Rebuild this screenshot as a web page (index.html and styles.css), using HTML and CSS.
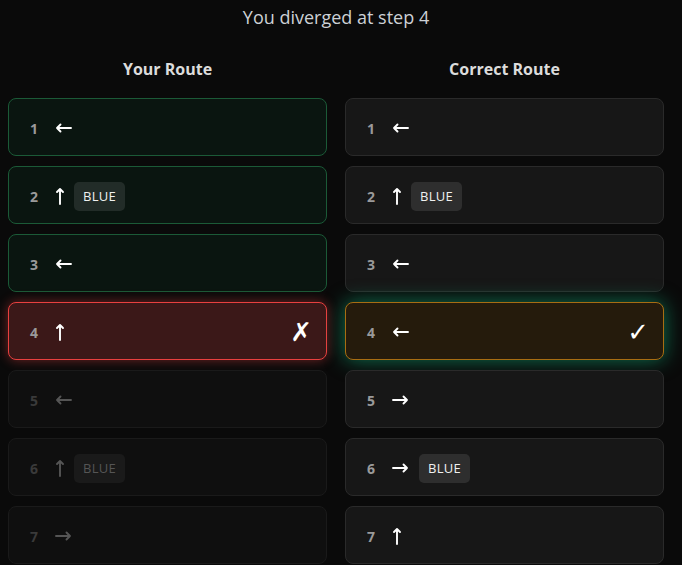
FILE: index.html
```html
<!DOCTYPE html>
<html>
<head>
<meta charset="utf-8">
<link rel="stylesheet" href="styles.css">
</head>
<body>
<div class="wrap">
  <h1 class="title">You diverged at step 4</h1>
  <div class="cols">
    <div class="col">
      <h2 class="heading">Your Route</h2>
      <div class="card ok"><span class="num">1</span><svg class="arrow h" viewBox="0 0 17 12"><path d="M16 6H2M5.5 2.5L2 6l3.5 3.5"/></svg></div>
      <div class="card ok"><span class="num">2</span><svg class="arrow v" viewBox="0 0 10 18"><path d="M5 17V2M2 5L5 2l3 3"/></svg><span class="badge">BLUE</span></div>
      <div class="card ok"><span class="num">3</span><svg class="arrow h" viewBox="0 0 17 12"><path d="M16 6H2M5.5 2.5L2 6l3.5 3.5"/></svg></div>
      <div class="card wrong"><span class="num">4</span><svg class="arrow v" viewBox="0 0 10 18"><path d="M5 17V2M2 5L5 2l3 3"/></svg><span class="mark">✗</span></div>
      <div class="card faded"><span class="num">5</span><svg class="arrow h" viewBox="0 0 17 12"><path d="M16 6H2M5.5 2.5L2 6l3.5 3.5"/></svg></div>
      <div class="card faded"><span class="num">6</span><svg class="arrow v" viewBox="0 0 10 18"><path d="M5 17V2M2 5L5 2l3 3"/></svg><span class="badge">BLUE</span></div>
      <div class="card faded"><span class="num">7</span><svg class="arrow h" viewBox="0 0 17 12"><path d="M1 6h14M11.5 2.5L15 6l-3.5 3.5"/></svg></div>
    </div>
    <div class="col">
      <h2 class="heading">Correct Route</h2>
      <div class="card"><span class="num">1</span><svg class="arrow h" viewBox="0 0 17 12"><path d="M16 6H2M5.5 2.5L2 6l3.5 3.5"/></svg></div>
      <div class="card"><span class="num">2</span><svg class="arrow v" viewBox="0 0 10 18"><path d="M5 17V2M2 5L5 2l3 3"/></svg><span class="badge">BLUE</span></div>
      <div class="card"><span class="num">3</span><svg class="arrow h" viewBox="0 0 17 12"><path d="M16 6H2M5.5 2.5L2 6l3.5 3.5"/></svg></div>
      <div class="card right"><span class="num">4</span><svg class="arrow h" viewBox="0 0 17 12"><path d="M16 6H2M5.5 2.5L2 6l3.5 3.5"/></svg><span class="mark">✓</span></div>
      <div class="card"><span class="num">5</span><svg class="arrow h" viewBox="0 0 17 12"><path d="M1 6h14M11.5 2.5L15 6l-3.5 3.5"/></svg></div>
      <div class="card"><span class="num">6</span><svg class="arrow h" viewBox="0 0 17 12"><path d="M1 6h14M11.5 2.5L15 6l-3.5 3.5"/></svg><span class="badge">BLUE</span></div>
      <div class="card"><span class="num">7</span><svg class="arrow v" viewBox="0 0 10 18"><path d="M5 17V2M2 5L5 2l3 3"/></svg></div>
    </div>
  </div>
</div>
</body>
</html>
```
FILE: styles.css
```css
html, body {
  margin: 0;
  padding: 0;
  background: #0a0a0a;
  overflow: hidden;
}
body {
  font-family: "Open Sans", "Noto Sans", sans-serif;
  color: #e5e5e5;
}
.wrap {
  width: 656px;
  padding: 5px 0 0 8px;
}
.title {
  margin: 0;
  font-size: 18px;
  line-height: 24px;
  font-weight: 400;
  text-align: center;
  color: #cdd1d6;
}
.cols {
  display: grid;
  grid-template-columns: 319px 319px;
  column-gap: 18px;
  margin-top: 29px;
}
.col {
  display: flex;
  flex-direction: column;
  gap: 10px;
}
.heading {
  margin: 0 0 8px 0;
  font-size: 16px;
  line-height: 22px;
  font-weight: 700;
  text-align: center;
  color: #dcdcdc;
}
.card {
  height: 54px;
  box-sizing: content-box;
  border: 1px solid #2a2a2a;
  border-radius: 8px;
  background: #171717;
  display: flex;
  align-items: center;
  padding: 2px 14px 0 21px;
  color: #ffffff;
}
.num {
  width: 14px;
  margin-right: 11px;
  font-size: 14px;
  font-weight: 700;
  color: #9a9a9a;
}
.arrow {
  flex: none;
  fill: none;
  stroke: #ffffff;
  stroke-width: 1.9;
  stroke-linecap: round;
  stroke-linejoin: round;
  margin-right: 9px;
}
.arrow.h {
  width: 17px;
  height: 12px;
  margin-right: 10px;
}
.arrow.v {
  width: 10px;
  height: 18px;
}
.badge {
  height: 29px;
  line-height: 29px;
  padding: 0 9px;
  border-radius: 5px;
  background: rgba(255, 255, 255, 0.1);
  font-size: 13px;
  letter-spacing: 0.3px;
  color: #f0f0f0;
}
.mark {
  margin-left: auto;
  font-family: "DejaVu Sans", sans-serif;
  font-size: 26px;
  line-height: 26px;
  font-weight: 700;
  color: #ffffff;
}
.ok {
  background: #0a1510;
  border-color: #1b5a37;
}
.wrong {
  background: #3b1818;
  border-color: #e8403f;
  box-shadow: 0 0 12px rgba(239, 68, 68, 0.45);
}
.right {
  background: #251b0c;
  border-color: #a86d12;
  box-shadow: 0 0 20px rgba(16, 185, 129, 0.6);
}
.faded {
  background: #0f0f0f;
  border-color: #1a1a1a;
}
.faded .num { color: #3a3a3a; }
.faded .arrow { stroke: #555555; }
.faded .badge { background: #1a1a1a; color: #555555; }
```
